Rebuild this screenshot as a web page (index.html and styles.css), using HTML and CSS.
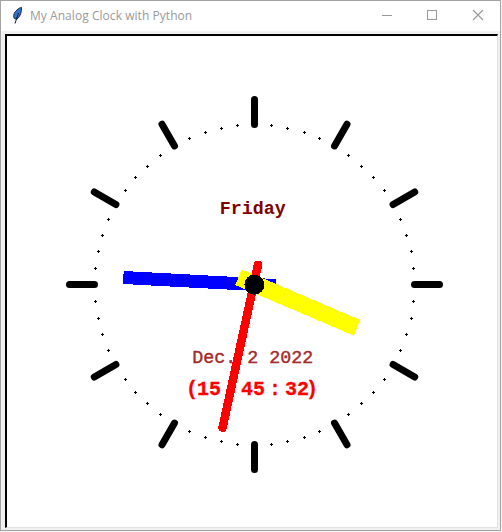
FILE: index.html
```html
<!DOCTYPE html>
<html lang="en">
<head>
<meta charset="utf-8">
<title>My Analog Clock with Python</title>
<link rel="stylesheet" href="styles.css">
</head>
<body>
<div class="window">
  <header class="titlebar">
    <svg class="feather" width="12" height="18" viewBox="0 0 12 18"><path class="feather-body" d="M3 12 C1 11 1 6 5 3 C6.5 1.5 8 0.5 9.5 0.5 C9.5 4 9 9 5 12 Z"/><path class="feather-stalk" d="M3 16.5 L6.5 6"/></svg>
    <span class="title">My Analog Clock with Python</span>
    <div class="controls">
      <svg class="control" width="46" height="30" viewBox="0 0 46 30"><path class="glyph" d="M19 14.5H29"/></svg>
      <svg class="control" width="46" height="30" viewBox="0 0 46 30"><rect class="glyph" x="18.5" y="9.5" width="9" height="9"/></svg>
      <svg class="control" width="45" height="30" viewBox="0 0 45 30"><path class="glyph-x" d="M18 9L28 19M28 9L18 19"/></svg>
    </div>
  </header>
  <main class="client">
    <div class="canvas-frame">
      <svg id="clock" class="clock" width="490" height="491" viewBox="0 0 490 491">
        <g id="marks"></g>
        <text class="day" x="245.8" y="177.5" text-anchor="middle">Friday</text>
        <text class="date" x="245.8" y="327" text-anchor="middle">Dec. 2 2022</text>
        <text class="time" x="244" y="358.5" dx="1 -1 0 0 0 0 0 0 0 0 0 0 0 -3" text-anchor="middle">(15 : 45 : 32)</text>
        <g class="crisp">
          <line class="hand minute" x1="116.3" y1="241.5" x2="268.7" y2="249.6"/>
          <line class="hand hour" x1="231.5" y1="241.2" x2="350" y2="291.8"/>
          <line class="hand second" x1="251" y1="228.8" x2="215.5" y2="391.8"/>
          <circle class="hub" cx="247.4" cy="248.7" r="10"/>
        </g>
      </svg>
    </div>
  </main>
</div>
<script src="clock.js"></script>
</body>
</html>
```
FILE: styles.css
```css
html, body { margin: 0; padding: 0; }
body { width: 502px; height: 532px; overflow: hidden; background: #f7f7f7; }
.window {
  box-sizing: border-box;
  width: 501px;
  height: 531px;
  display: flex;
  flex-direction: column;
  border: 1px solid #a3a3a3;
  background: #f0f0f0;
}
.titlebar {
  height: 30px;
  flex: none;
  display: flex;
  align-items: center;
  background: #fff;
  padding-left: 11px;
}
.feather { flex: none; }
.feather-body { fill: #2f74d0; stroke: #0b1830; stroke-width: 0.9; }
.feather-stalk { stroke: #0b1830; stroke-width: 1; fill: none; }
.title {
  margin-left: 6px;
  padding-bottom: 2px;
  font: 12px "Open Sans", "Noto Sans", sans-serif;
  letter-spacing: 0.05px;
  color: #9a9a9a;
  white-space: nowrap;
}
.controls { margin-left: auto; display: flex; }
.control { display: block; }
.glyph { fill: none; stroke: #999; stroke-width: 1; shape-rendering: crispEdges; }
.glyph-x { fill: none; stroke: #999; stroke-width: 1.1; }
.client { flex: 1; min-height: 0; padding: 3px 2px 2px 4px; }
.canvas-frame {
  box-sizing: border-box;
  height: 494px;
  border-style: solid;
  border-width: 2px 1px 1px 2px;
  border-color: #000 #e3e3e3 #e3e3e3 #000;
  background: #fff;
  overflow: hidden;
}
.clock { display: block; background: #fff; }
.crisp { shape-rendering: crispEdges; }
.tick { stroke: #000; stroke-width: 7; stroke-linecap: round; }
.dot { fill: #000; shape-rendering: crispEdges; }
.hand { fill: none; }
.minute { stroke: #0000ff; stroke-width: 13; }
.hour { stroke: #ffff00; stroke-width: 17; }
.second { stroke: #ff0000; stroke-width: 8.5; stroke-linecap: round; }
.hub { fill: #000; }
.day, .date { font-family: "Liberation Mono", monospace; font-weight: 700; font-size: 18.33px; }
.day { fill: #800000; }
.date { fill: #a52a2a; font-weight: 400; stroke: #a52a2a; stroke-width: 0.4; }
.time { font-family: "Liberation Mono", monospace; font-weight: 700; font-size: 20px; word-spacing: -8px; fill: #ff0000; stroke: #ff0000; stroke-width: 0.3; }
```
FILE: clock.js
```js
var NS = "http://www.w3.org/2000/svg";
var marks = document.getElementById("marks");
var cx = 247.5, cy = 248.5;
for (var i = 0; i < 60; i++) {
  var a = i * Math.PI / 30, s = Math.sin(a), c = Math.cos(a);
  if (i % 5 === 0) {
    var l = document.createElementNS(NS, "line");
    l.setAttribute("class", "tick");
    l.setAttribute("x1", cx + 160 * s);
    l.setAttribute("y1", cy - 160 * c);
    l.setAttribute("x2", cx + 185 * s);
    l.setAttribute("y2", cy - 185 * c);
    marks.appendChild(l);
  } else {
    var x = Math.round(cx - 0.3 + 160 * s), y = Math.round(cy + 160 * -c);
    var d = document.createElementNS(NS, "path");
    d.setAttribute("class", "dot");
    d.setAttribute("d", "M" + (x - 1) + " " + y + "h1v-1h1v1h1v1h-1v1h-1v-1h-1z");
    marks.appendChild(d);
  }
}
```
